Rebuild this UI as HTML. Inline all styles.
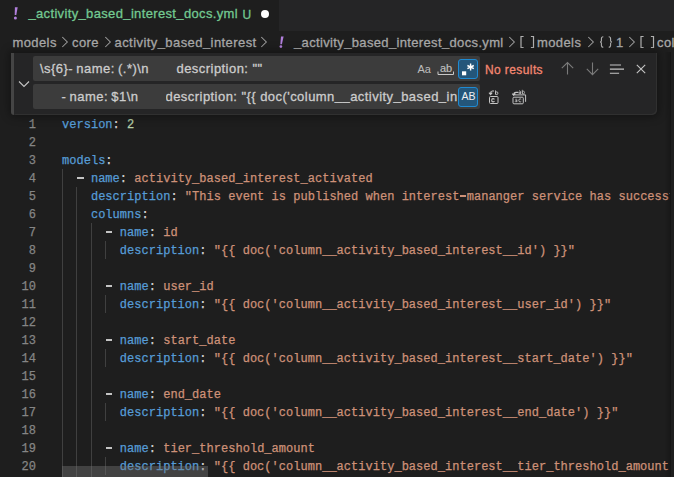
<!DOCTYPE html>
<html><head><meta charset="utf-8">
<style>
*{margin:0;padding:0;box-sizing:border-box}
html,body{width:674px;height:477px;overflow:hidden;background:#1e1e1e}
body{-webkit-text-stroke:0.3px currentColor;position:relative;font-family:"Liberation Sans",sans-serif;font-size:13px;color:#cccccc}
.abs{position:absolute;white-space:pre}
.u{position:relative;top:-1.5px}
.t{position:absolute;white-space:pre;line-height:13px;letter-spacing:0.3px}
#tabbar{position:absolute;left:0;top:0;width:674px;height:31px;background:#252526}
#tab{position:absolute;left:0;top:0;width:279px;height:31px;background:#1e1e1e}
#code{-webkit-text-stroke:0.25px currentColor;position:absolute;left:0;top:116px;width:670px;height:361px;overflow:hidden;font-family:"Liberation Mono",monospace;font-size:12px;line-height:18px;letter-spacing:0.025px}
.ln{position:absolute;left:0;width:36px;text-align:right;color:#858585;height:18px}
.cl{position:absolute;left:62px;white-space:pre;color:#d4d4d4;height:18px}
.d{position:relative;color:transparent}.d::after{content:"";position:absolute;left:0.5px;width:6.6px;top:4.9px;height:1.8px;background:#c4c4c4}
.d2{position:relative;color:transparent}.d2::after{content:"";position:absolute;left:0.8px;width:6px;top:5.1px;height:1.8px;background:#ce9178}
.k{color:#569cd6}.s{color:#ce9178}.n{color:#b5cea8}
.g{position:absolute;width:1px;background:#404040}
.bc{color:#a9a9a9}
.chev{position:absolute}
#find{position:absolute;left:11px;top:53px;width:646px;height:62px;background:#252526;box-shadow:0 0 8px 2px rgba(0,0,0,0.36),inset -1px -1px 0 #303030;border-radius:0 0 5px 5px}
#sash{position:absolute;left:0;top:0;width:3px;height:62px;background:#454545;border-radius:0 0 0 3px}
.inp{position:absolute;background:#3c3c3c;border-radius:2px;overflow:hidden}
.it{position:absolute;white-space:pre;color:#cccccc;font-size:13px;line-height:13px;letter-spacing:0.45px;word-spacing:-0.75px}
.tog{position:absolute;width:20px;height:20px;border-radius:3px}
.on{background:#24567a;border:1px solid #1f8ad2}
</style></head><body>
<div id="tabbar"><div id="tab"></div></div>
<svg class="abs" style="left:0;top:0" width="30" height="30" viewBox="0 0 30 30"><path d="M14.9 7.3 L17.7 7.3 L16.3 14.9 L14.7 14.9 Z" fill="#b17fdc"/><circle cx="15.4" cy="18" r="1.5" fill="#b17fdc"/></svg>
<div class="t" style="left:28.4px;top:7px;color:#73c991;letter-spacing:0.35px"><span class="u">_</span>activity<span class="u">_</span>based<span class="u">_</span>interest<span class="u">_</span>docs.yml</div>
<div class="t" style="left:242.5px;top:9px;color:#73c991;letter-spacing:0;font-size:12px;line-height:12px">U</div>
<div class="abs" style="left:261px;top:10px;width:8px;height:8px;border-radius:50%;background:#ffffff"></div>

<!-- breadcrumbs -->
<div class="t bc" style="left:12.5px;top:36px;letter-spacing:0.4px">models</div>
<svg class="chev" style="left:61px;top:35px" width="9" height="14" viewBox="0 0 9 14"><path d="M1.3 2 L6.3 7 L1.3 12" fill="none" stroke="#a0a0a0" stroke-width="1.05"/></svg>
<div class="t bc" style="left:72px;top:36px;letter-spacing:0.4px">core</div>
<svg class="chev" style="left:104px;top:35px" width="9" height="14" viewBox="0 0 9 14"><path d="M1.3 2 L6.3 7 L1.3 12" fill="none" stroke="#a0a0a0" stroke-width="1.05"/></svg>
<div class="t bc" style="left:114.5px;top:36px;letter-spacing:0.43px">activity<span class="u">_</span>based<span class="u">_</span>interest</div>
<svg class="chev" style="left:260px;top:35px" width="9" height="14" viewBox="0 0 9 14"><path d="M1.3 2 L6.3 7 L1.3 12" fill="none" stroke="#a0a0a0" stroke-width="1.05"/></svg>
<svg class="abs" style="left:270px;top:30px" width="20" height="22" viewBox="0 0 20 22"><path d="M11 6.5 L13.6 6.5 L11.9 14.3 L10.3 14.3 Z" fill="#b17fdc"/><circle cx="10.9" cy="16.6" r="1.35" fill="#b17fdc"/></svg>
<div class="t bc" style="left:294px;top:36px;letter-spacing:0.35px"><span class="u">_</span>activity<span class="u">_</span>based<span class="u">_</span>interest<span class="u">_</span>docs.yml</div>
<svg class="chev" style="left:507.5px;top:35px" width="9" height="14" viewBox="0 0 9 14"><path d="M1.3 2 L6.3 7 L1.3 12" fill="none" stroke="#a0a0a0" stroke-width="1.05"/></svg>
<svg class="abs" style="left:518.5px;top:34px" width="18" height="16" viewBox="0 0 18 16"><path d="M4.6 2.5 H2 V13.5 H4.6 M11.9 2.5 H14.5 V13.5 H11.9" fill="none" stroke="#b0b0b0" stroke-width="1.2"/></svg>
<div class="t bc" style="left:537px;top:36px;letter-spacing:0.4px">models</div>
<svg class="chev" style="left:587px;top:35px" width="9" height="14" viewBox="0 0 9 14"><path d="M1.3 2 L6.3 7 L1.3 12" fill="none" stroke="#a0a0a0" stroke-width="1.05"/></svg>
<svg class="abs" style="left:598px;top:34px" width="16" height="16" viewBox="0 0 16 16"><path d="M5.3 2.8 Q3.4 2.8 3.4 4.8 V6.8 Q3.4 8 2 8 Q3.4 8 3.4 9.2 V11.2 Q3.4 13.2 5.3 13.2 M10.7 2.8 Q12.6 2.8 12.6 4.8 V6.8 Q12.6 8 14 8 Q12.6 8 12.6 9.2 V11.2 Q12.6 13.2 10.7 13.2" fill="none" stroke="#b0b0b0" stroke-width="1.1"/></svg>
<div class="t bc" style="left:616px;top:36px">1</div>
<svg class="chev" style="left:627.5px;top:35px" width="9" height="14" viewBox="0 0 9 14"><path d="M1.3 2 L6.3 7 L1.3 12" fill="none" stroke="#a0a0a0" stroke-width="1.05"/></svg>
<svg class="abs" style="left:638.5px;top:34px" width="18" height="16" viewBox="0 0 18 16"><path d="M4.6 2.5 H2 V13.5 H4.6 M11.9 2.5 H14.5 V13.5 H11.9" fill="none" stroke="#b0b0b0" stroke-width="1.2"/></svg>
<div class="t bc" style="left:657px;top:36px;letter-spacing:0.4px">col</div>

<div id="code">
<div class="ln" style="top:0">1</div><div class="cl" style="top:0"><span class="k">version</span>: <span class="n">2</span></div>
<div class="ln" style="top:18px">2</div>
<div class="ln" style="top:36px">3</div><div class="cl" style="top:36px"><span class="k">models</span>:</div>
<div class="ln" style="top:54px">4</div><div class="cl" style="top:54px">  <span class="d">-</span> <span class="k">name</span>: <span class="s">activity_based_interest_activated</span></div>
<div class="ln" style="top:72px">5</div><div class="cl" style="top:72px">    <span class="k">description</span>: <span class="s">"This event is published when interest<span class="d2">-</span>mananger service has successfully</span></div>
<div class="ln" style="top:90px">6</div><div class="cl" style="top:90px">    <span class="k">columns</span>:</div>
<div class="ln" style="top:108px">7</div><div class="cl" style="top:108px">      <span class="d">-</span> <span class="k">name</span>: <span class="s">id</span></div>
<div class="ln" style="top:126px">8</div><div class="cl" style="top:126px">        <span class="k">description</span>: <span class="s">"{{ doc('column__activity_based_interest__id') }}"</span></div>
<div class="ln" style="top:144px">9</div>
<div class="ln" style="top:162px">10</div><div class="cl" style="top:162px">      <span class="d">-</span> <span class="k">name</span>: <span class="s">user_id</span></div>
<div class="ln" style="top:180px">11</div><div class="cl" style="top:180px">        <span class="k">description</span>: <span class="s">"{{ doc('column__activity_based_interest__user_id') }}"</span></div>
<div class="ln" style="top:198px">12</div>
<div class="ln" style="top:216px">13</div><div class="cl" style="top:216px">      <span class="d">-</span> <span class="k">name</span>: <span class="s">start_date</span></div>
<div class="ln" style="top:234px">14</div><div class="cl" style="top:234px">        <span class="k">description</span>: <span class="s">"{{ doc('column__activity_based_interest__start_date') }}"</span></div>
<div class="ln" style="top:252px">15</div>
<div class="ln" style="top:270px">16</div><div class="cl" style="top:270px">      <span class="d">-</span> <span class="k">name</span>: <span class="s">end_date</span></div>
<div class="ln" style="top:288px">17</div><div class="cl" style="top:288px">        <span class="k">description</span>: <span class="s">"{{ doc('column__activity_based_interest__end_date') }}"</span></div>
<div class="ln" style="top:306px">18</div>
<div class="ln" style="top:324px">19</div><div class="cl" style="top:324px">      <span class="d">-</span> <span class="k">name</span>: <span class="s">tier_threshold_amount</span></div>
<div class="ln" style="top:342px">20</div><div class="cl" style="top:342px">        <span class="k">description</span>: <span class="s">"{{ doc('column__activity_based_interest__tier_threshold_amount') }}"</span></div>
<!-- guides -->
<div class="g" style="left:62px;top:53px;height:320px"></div>
<div class="g" style="left:76px;top:71px;height:302px"></div>
<div class="g" style="left:91px;top:107px;height:266px"></div>
<div class="g" style="left:105px;top:125px;height:18px"></div>
<div class="g" style="left:105px;top:179px;height:18px"></div>
<div class="g" style="left:105px;top:233px;height:18px"></div>
<div class="g" style="left:105px;top:287px;height:18px"></div>
<div class="g" style="left:105px;top:341px;height:18px"></div>
</div>
<div class="abs" style="left:62px;top:466px;width:146px;height:11px;background:rgba(121,121,121,0.4)"></div>
<div class="abs" style="left:664px;top:52px;width:6px;height:425px;background:linear-gradient(to right,rgba(0,0,0,0),rgba(0,0,0,0.18))"></div><div class="abs" style="left:670px;top:52px;width:1px;height:425px;background:#151515"></div>

<div id="find"><div id="sash"></div></div>
<svg class="abs" style="left:17px;top:79px" width="14" height="10" viewBox="0 0 14 10"><path d="M2 2.5 L7 7.5 L12 2.5" fill="none" stroke="#c5c5c5" stroke-width="1.1"/></svg>
<div class="inp" style="left:33px;top:56px;width:447px;height:25px">
  <div class="it" style="left:7px;top:6px;height:18px">\s{6}- name: (.*)\n</div><div class="it" style="left:143.5px;top:6px;height:18px;word-spacing:0">description: ""</div>
</div>
<div class="abs" style="left:417.5px;top:64px;color:#bcbcbc;font-size:11px;line-height:11px;-webkit-text-stroke:0">Aa</div>
<div class="abs" style="left:440px;top:63px;color:#c0c0c0;font-size:11px;line-height:11px;-webkit-text-stroke:0.15px currentColor">ab</div>
<svg class="abs" style="left:436px;top:70px" width="20" height="7" viewBox="0 0 20 7"><path d="M2 1.5 V4.5 H17.5 V1.5" fill="none" stroke="#c8c8c8" stroke-width="1"/></svg>
<div class="tog on" style="left:458px;top:59px"></div>
<svg class="abs" style="left:458px;top:59px" width="20" height="20" viewBox="0 0 20 20"><rect x="4" y="12.3" width="4.2" height="4" fill="#ffffff"/><path d="M12.6 4.6 V11.6 M9.4 6.5 L15.8 9.7 M9.4 9.7 L15.8 6.5" stroke="#ffffff" stroke-width="1.4" fill="none"/></svg>
<div class="inp" style="left:33px;top:84px;width:447px;height:25px">
  <div class="it" style="left:28.5px;top:6px;height:18px">- name: $1\n</div><div class="it" style="left:132.5px;top:6px;width:291px;height:18px;overflow:hidden;word-spacing:0">description: "{{ doc('column<span class="u">_</span><span class="u">_</span>activity<span class="u">_</span>based<span class="u">_</span>interest<span class="u">_</span><span class="u">_</span></div>
</div>
<div class="tog on" style="left:458px;top:87px"></div>
<div class="abs" style="left:461.5px;top:91px;color:#f0f0f0;font-size:10.5px;line-height:11px;-webkit-text-stroke:0">AB</div>
<div class="abs" style="left:485px;top:64px;color:#f48771;font-size:12px;line-height:12px;letter-spacing:0.4px">No results</div>
<svg class="abs" style="left:558px;top:60px" width="20" height="18" viewBox="0 0 20 18"><path d="M9.5 2.5 V14.6 M3.8 8.2 L9.5 2.5 L15.2 8.2" fill="none" stroke="#7a7a7a" stroke-width="1.1"/></svg>
<svg class="abs" style="left:582px;top:60px" width="20" height="18" viewBox="0 0 20 18"><path d="M10.5 2.5 V14.6 M4.8 8.9 L10.5 14.6 L16.2 8.9" fill="none" stroke="#7a7a7a" stroke-width="1.1"/></svg>
<svg class="abs" style="left:606px;top:60px" width="22" height="18" viewBox="0 0 22 18"><path d="M3.9 5 H15 M3.9 9.1 H18 M3.9 13.3 H13.1" fill="none" stroke="#c5c5c5" stroke-width="1.1"/></svg>
<svg class="abs" style="left:632px;top:60px" width="18" height="18" viewBox="0 0 18 18"><path d="M4.8 4.8 L13.2 13.2 M13.2 4.8 L4.8 13.2" fill="none" stroke="#c5c5c5" stroke-width="1.1"/></svg>
<svg class="abs" style="left:482px;top:84px" width="50" height="24" viewBox="0 0 50 24" fill="none" stroke="#c5c5c5">
<rect x="7.5" y="12.5" width="8.5" height="7" rx="1" stroke-width="1"/>
<path d="M12.5 15.3 Q11.8 14.6 11 14.6 Q9.7 14.6 9.7 16.2 Q9.7 17.9 11 17.9 Q11.8 17.9 12.5 17.2" stroke-width="1.1"/>
<path d="M12 7 H10.4 Q8.6 7 8.6 9 V10.2 M7 8.7 L8.6 10.6 L10.2 8.7" stroke-width="1.1"/>
<path d="M13.5 6.4 V10.6 M13.5 9.2 Q13.5 7.8 14.7 7.8 Q15.9 7.8 15.9 9.2 Q15.9 10.6 14.7 10.6 Q13.5 10.6 13.5 9.2" stroke-width="0.9"/>
<rect x="31" y="13.2" width="10.3" height="6.6" rx="1" stroke-width="1"/>
<path d="M33 10.9 H43.6 V17.8" stroke-width="1"/>
<path d="M33.3 15.3 Q34.6 14.9 34.9 15.6 V18 M34.9 16.6 Q33.2 16.4 33.2 17.3 Q33.3 18.2 34.9 17.6" stroke-width="0.8"/>
<path d="M39.2 15.3 Q38.7 14.9 38 14.9 Q36.8 14.9 36.8 16.4 Q36.8 17.9 38 17.9 Q38.7 17.9 39.2 17.5" stroke-width="0.9"/>
<path d="M36.5 8.4 H34 Q31.8 8.4 31.8 10.4 V11 M30.2 9.6 L31.8 11.4 L33.4 9.6" stroke-width="1.1"/>
<path d="M37 7 Q38.3 6.6 38.5 7.4 V9.9 M38.5 8.4 Q36.8 8.2 36.8 9.1 Q36.9 10.1 38.5 9.4 M40.3 5.8 V9.9 M40.3 8.6 Q40.3 7.2 41.4 7.2 Q42.5 7.2 42.5 8.6 Q42.5 9.9 41.4 9.9 Q40.3 9.9 40.3 8.6" stroke-width="0.8"/>
</svg>
</body></html>
